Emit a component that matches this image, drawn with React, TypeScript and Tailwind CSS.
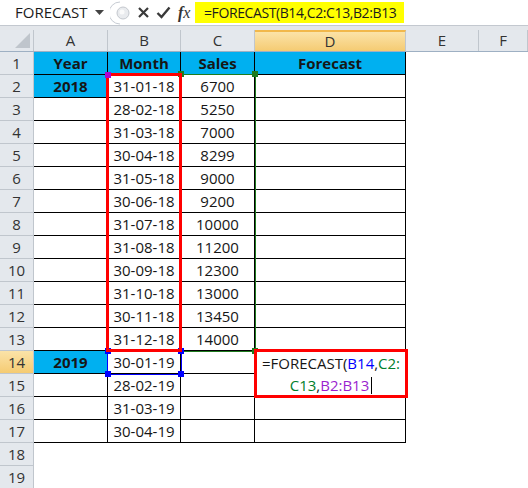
import React from 'react';

const FONT = { fontFamily: '"Open Sans", "Liberation Sans", sans-serif' };

const dates18 = ['31-01-18', '28-02-18', '31-03-18', '30-04-18', '31-05-18', '30-06-18', '31-07-18', '31-08-18', '30-09-18', '31-10-18', '30-11-18', '31-12-18'];
const sales = ['6700', '5250', '7000', '8299', '9000', '9200', '10000', '11200', '12300', '13000', '13450', '14000'];
const dates19 = ['30-01-19', '28-02-19', '31-03-19', '30-04-19'];

type Row = { a?: string; b?: string; c?: string; d?: string; head?: boolean; yearBlue?: boolean };

const rows: Row[] = [
  { a: 'Year', b: 'Month', c: 'Sales', d: 'Forecast', head: true },
  ...dates18.map((b, i) => ({ a: i === 0 ? '2018' : '', b, c: sales[i], yearBlue: i === 0 })),
  ...dates19.map((b, i) => ({ a: i === 0 ? '2019' : '', b, yearBlue: i === 0 })),
];

const colHeads = [
  { label: 'A', w: 'w-[74px]' },
  { label: 'B', w: 'w-[73px]' },
  { label: 'C', w: 'w-[74px]' },
  { label: 'D', w: 'w-[151px]', active: true },
  { label: 'E', w: 'w-[73px]' },
  { label: 'F', w: 'flex-1' },
];

function Handle({ className }: { className: string }) {
  return <div className={`absolute h-[6px] w-[6px] ${className}`} />;
}

function FormulaBar() {
  return (
    <div className="flex h-[26px] items-center border-b border-[#c3c8cf] bg-white">
      <div className="flex h-full w-[110px] items-center justify-between pl-[15px] pr-[6px] text-[15px] text-[#1b1b1b]">
        <span>FORECAST</span>
        <svg width="9" height="5" viewBox="0 0 9 5">
          <path d="M0 0h9L4.5 5z" fill="#444" />
        </svg>
      </div>
      <div className="flex h-full w-[85px] items-center">
        <svg width="20" height="26" viewBox="0 0 20 26">
          <path d="M10 2a11 11 0 0 0 0 22" fill="none" stroke="#c7ccd3" strokeWidth="1" />
          <circle cx="13" cy="13" r="6" fill="#e9ebee" stroke="#c4c8ce" />
          <circle cx="12" cy="12" r="2.5" fill="#fafafa" />
        </svg>
        <svg className="ml-[7px]" width="13" height="13" viewBox="0 0 13 13">
          <path d="M2 2l9 9M11 2l-9 9" stroke="#3a3a3a" strokeWidth="2.2" />
        </svg>
        <svg className="ml-[6px]" width="15" height="13" viewBox="0 0 15 13">
          <path d="M1.5 7l4 4L13.5 1.5" fill="none" stroke="#3a3a3a" strokeWidth="2.4" />
        </svg>
        <span className="ml-[7px] text-[16px] italic text-[#333]" style={{ fontFamily: '"Liberation Serif", serif' }}>
          <span className="font-bold">f</span>x
        </span>
      </div>
      <div className="flex h-[21px] w-[209px] items-center bg-[#ffff00] pl-[9px] text-[14px] tracking-[-0.4px] text-[#1b1b1b]">
        =FORECAST(B14,C2:C13,B2:B13
      </div>
    </div>
  );
}

export default function App() {
  return (
    <div className="relative h-[488px] w-[528px] overflow-hidden bg-white" style={FONT}>
      <FormulaBar />
      <div className="h-[4px] bg-[#e3e6ea]" />

      <div className="flex h-[22px] border-b border-[#9eb0c3] bg-[#e4e8ed] text-[15px] text-[#333]">
        <div className="relative w-[34px] border-r border-[#c0c6cd]">
          <svg className="absolute bottom-[3px] right-[3px]" width="15" height="15" viewBox="0 0 15 15">
            <path d="M15 0v15H0z" fill="#bfc5cc" />
          </svg>
        </div>
        {colHeads.map((c) => (
          <div
            key={c.label}
            className={`flex items-center justify-center border-r border-[#c0c6cd] ${c.w} ${
              c.active ? 'bg-gradient-to-b from-[#fbe3a8] to-[#f5cb72] border-t-2 border-t-[#f2b84b]' : ''
            }`}
          >
            {c.label}
          </div>
        ))}
      </div>

      {[...rows, {}, {}].map((r: Row, i) => {
        const n = i + 1;
        const inTable = n <= 17;
        const cellBorder = inTable ? 'border-r border-b border-black' : '';
        const blue = r.head ? 'bg-[#00b0f0]' : '';
        return (
          <div key={n} className="flex h-[23px] text-[15px] text-[#161616]">
            <div
              className={`flex w-[34px] items-center justify-center border-r border-b border-[#c0c6cd] text-[#333] ${
                n === 14 ? 'bg-gradient-to-b from-[#fbe3a8] to-[#f5cb72]' : 'bg-[#e4e8ed]'
              }`}
            >
              {n}
            </div>
            <div className={`flex w-[74px] items-center justify-center font-bold ${cellBorder} ${r.head || r.yearBlue ? 'bg-[#00b0f0]' : ''}`}>
              {r.a}
            </div>
            <div className={`flex w-[73px] items-center justify-center ${cellBorder} ${blue} ${r.head ? 'font-bold' : ''}`}>
              {r.b}
            </div>
            <div className={`flex w-[74px] items-center justify-center ${cellBorder} ${blue} ${r.head ? 'font-bold' : ''}`}>
              {r.c}
            </div>
            <div className={`flex w-[151px] items-center justify-center ${cellBorder} ${blue} ${r.head ? 'font-bold' : ''}`}>
              {r.d}
            </div>
            <div className="flex-1" />
          </div>
        );
      })}

      {/* C2:C13 range (green) */}
      <div className="absolute left-[181px] top-[74px] h-[278px] w-[75px] border border-[#1e7b1e]" />
      <Handle className="left-[178px] top-[71px] bg-[#1e7b1e]" />
      <Handle className="left-[252px] top-[71px] bg-[#1e7b1e]" />
      <Handle className="left-[178px] top-[348px] bg-[#1e7b1e]" />
      <Handle className="left-[252px] top-[348px] bg-[#1e7b1e]" />

      {/* B14 ref (blue) */}
      <div className="absolute left-[107px] top-[351px] h-[24px] w-[75px] border border-[#0000ff]" />
      <Handle className="left-[105px] top-[348px] bg-[#0000ff]" />
      <Handle className="left-[178px] top-[348px] bg-[#0000ff]" />
      <Handle className="left-[105px] top-[371px] bg-[#0000ff]" />
      <Handle className="left-[178px] top-[371px] bg-[#0000ff]" />

      {/* B2:B13 highlight */}
      <div className="absolute left-[106px] top-[73px] h-[279px] w-[76px] border-[3px] border-[#ff0000]" />
      <Handle className="left-[105px] top-[72px] bg-[#b000d0]" />

      {/* D14 editing */}
      <div className="absolute left-[254px] top-[349px] flex h-[49px] w-[154px] flex-col items-center justify-center border-[3px] border-[#ff0000] bg-white pt-[1px] text-[15px] leading-[22px] text-[#161616]">
        <div>
          =FORECAST(<span className="text-[#0000ff]">B14</span>,<span className="text-[#00802b]">C2:</span>
        </div>
        <div className="flex items-center">
          <span className="text-[#00802b]">C13</span>,<span className="text-[#9b1fcf]">B2:B13</span>
          <span className="ml-[2px] inline-block h-[17px] w-px bg-black" />
        </div>
      </div>
    </div>
  );
}
